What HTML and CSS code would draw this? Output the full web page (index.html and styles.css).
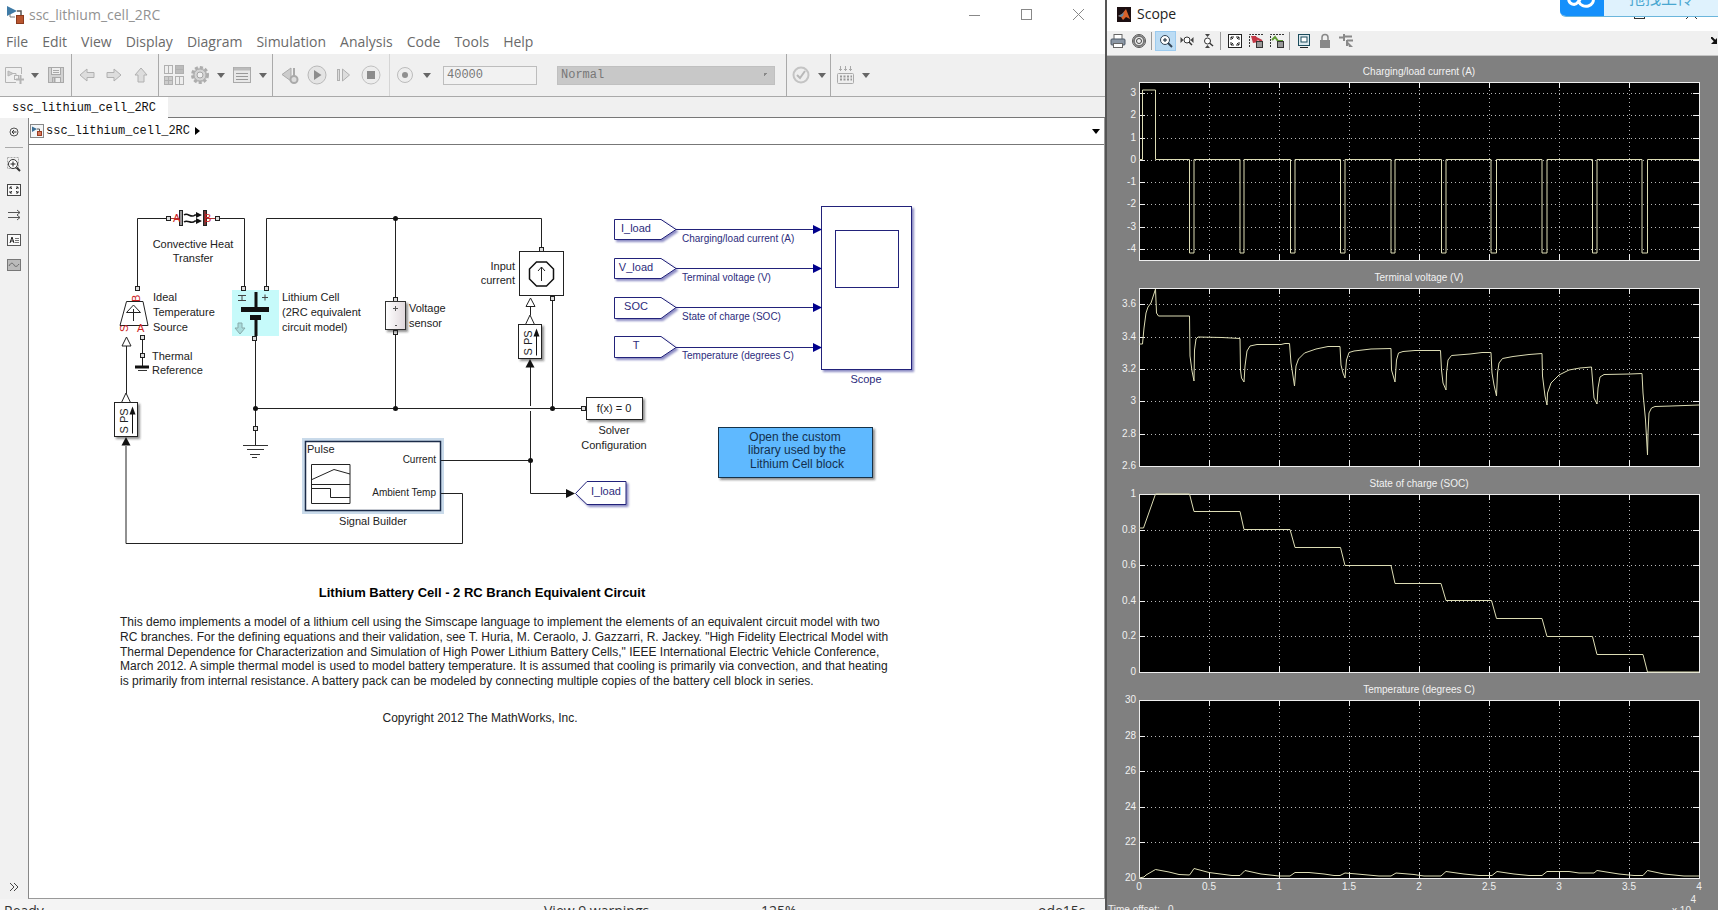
FILE: index.html
```html
<!DOCTYPE html>
<html lang="en">
<head>
<meta charset="utf-8">
<title>ssc_lithium_cell_2RC</title>
<link rel="stylesheet" href="styles.css">
</head>
<body>
<div class="desktop">
<main class="model-window">
  <header class="titlebar">
    <svg class="app-icon" width="18" height="20" viewBox="0 0 18 20"><path d="M0 1L10 6L0 11Z" fill="#3f7ba6"/><path d="M10 6H14V11" fill="none" stroke="#555" stroke-width="1.500"/><path d="M3 9V12H8" fill="none" stroke="#777"/><rect x="9.500" y="10.500" width="7" height="8" fill="#b8552f" stroke="#8b3b1e"/></svg>
    <h1 class="title">ssc_lithium_cell_2RC</h1>
    <div class="window-controls">
      <button aria-label="Minimize"><svg width="12" height="12"><path d="M0 6.500H11" stroke="#888" fill="none"/></svg></button>
      <button aria-label="Maximize"><svg width="12" height="12"><rect x=".5" y=".5" width="10" height="10" stroke="#888" fill="none"/></svg></button>
      <button aria-label="Close"><svg width="12" height="12"><path d="M0 0L11 11M11 0L0 11" stroke="#888" fill="none"/></svg></button>
    </div>
  </header>
  <nav class="menubar">
    <button>File</button><button>Edit</button><button>View</button><button>Display</button><button>Diagram</button><button>Simulation</button><button>Analysis</button><button>Code</button><button>Tools</button><button>Help</button>
  </nav>
  <div class="toolbar">
    <div class="group group-file">
      <button class="tool" aria-label="New model"><svg width="20" height="20" viewBox="0 0 20 20"><g fill="none" stroke="#b4b4b4"><path d="M12 17.500H1.500V2.500H17.500V9"/><path d="M4 6L9 8.500L4 11Z" fill="#ccc"/><path d="M9 8.500H12V11"/><rect x="10.500" y="10.500" width="4" height="4"/><path d="M16.500 10V19M12 14.500H20" stroke-width="2"/></g></svg></button>
      <button class="drop" aria-label="New options"></button>
      <button class="tool" aria-label="Save"><svg width="20" height="20" viewBox="0 0 20 20"><g fill="#d2d2d2" stroke="#a9a9a9"><rect x="2.500" y="2.500" width="15" height="15"/><rect x="5.500" y="2.500" width="9" height="7" fill="#eee"/><path d="M7 5.500H13M7 7.500H13"/><rect x="6.500" y="12.500" width="8" height="5" fill="#eee"/><path d="M8.500 13V17" stroke-width="2"/></g></svg></button>
    </div>
    <div class="group group-nav">
      <button class="tool" aria-label="Back"><svg width="20" height="20" viewBox="0 0 20 20"><path d="M3 10L10 4V7.500H17V12.500H10V16Z" fill="#ddd" stroke="#b0b0b0"/></svg></button>
      <button class="tool" aria-label="Forward"><svg width="20" height="20" viewBox="0 0 20 20"><path d="M17 10L10 4V7.500H3V12.500H10V16Z" fill="#ddd" stroke="#b0b0b0"/></svg></button>
      <button class="tool" aria-label="Up"><svg width="20" height="20" viewBox="0 0 20 20"><path d="M10 3L16 10H13V17H7V10H4Z" fill="#ddd" stroke="#b0b0b0"/></svg></button>
    </div>
    <div class="group group-lib">
      <button class="tool" aria-label="Library browser"><svg width="20" height="20" viewBox="0 0 20 20"><g fill="#eee" stroke="#b0b0b0"><rect x=".5" y=".5" width="8" height="8"/><rect x="11.500" y=".5" width="8" height="8" fill="#bbb"/><rect x=".5" y="11.500" width="8" height="8" fill="#ccc"/><rect x="11.500" y="11.500" width="8" height="8"/><path d="M4.500 0V8M1 15.500H8M4.500 12V19M12 4.500H19M15.500 12V19"/></g></svg></button>
      <button class="tool" aria-label="Configuration"><svg width="20" height="20" viewBox="0 0 20 20"><circle cx="10" cy="10" r="7.500" fill="#ccc" stroke="#adadad" stroke-width="3" stroke-dasharray="3 2"/><circle cx="10" cy="10" r="6" fill="#d5d5d5" stroke="#adadad"/><circle cx="10" cy="10" r="3" fill="#f0f0f0" stroke="#a5a5a5"/></svg></button>
      <button class="drop" aria-label="Configuration options"></button>
      <button class="tool" aria-label="Model explorer"><svg width="20" height="20" viewBox="0 0 20 20"><rect x="1.500" y="2.500" width="17" height="15" fill="#e8e8e8" stroke="#aaa"/><path d="M2 4H18" stroke="#bbb" stroke-width="3"/><path d="M4 8.500H16M4 11.500H16M4 14.500H16" stroke="#999"/></svg></button>
      <button class="drop" aria-label="Explorer options"></button>
    </div>
    <div class="group group-run">
      <button class="tool" aria-label="Step back"><svg width="20" height="20" viewBox="0 0 20 20"><path d="M11 3V16L2 9.500Z" fill="#ccc" stroke="#aaa"/><path d="M14 3V11" stroke="#aaa" stroke-width="2"/><circle cx="14" cy="14.500" r="3.500" fill="#ddd" stroke="#aaa" stroke-width="2"/></svg></button>
      <button class="tool" aria-label="Run"><svg width="20" height="20" viewBox="0 0 20 20"><circle cx="10" cy="10" r="9" fill="#e4e4e4" stroke="#b8b8b8"/><path d="M7 5L14.500 10L7 15Z" fill="#8c8c8c"/></svg></button>
      <button class="tool" aria-label="Step forward"><svg width="20" height="20" viewBox="0 0 20 20"><path d="M8.500 4L15.500 10L8.500 16Z" fill="#ddd" stroke="#b0b0b0"/><rect x="3.500" y="4.500" width="2" height="11" fill="#ddd" stroke="#b0b0b0"/></svg></button>
      <button class="tool" aria-label="Stop"><svg width="20" height="20" viewBox="0 0 20 20"><circle cx="10" cy="10" r="9" fill="#ededed" stroke="#c0c0c0"/><rect x="6" y="6" width="8" height="8" fill="#8c8c8c"/></svg></button>
    </div>
    <div class="group group-sim">
      <button class="tool" aria-label="Record"><svg width="20" height="20" viewBox="0 0 20 20"><circle cx="10" cy="10" r="7.500" fill="#ededed" stroke="#bcbcbc"/><circle cx="10" cy="10" r="3" fill="#8f8f8f"/></svg></button>
      <button class="drop" aria-label="Record options"></button>
      <input class="stop-time" type="text" value="40000" aria-label="Stop time">
      <select class="sim-mode" aria-label="Simulation mode"><option>Normal</option></select>
    </div>
    <div class="group group-check">
      <button class="tool" aria-label="Model advisor"><svg width="20" height="20" viewBox="0 0 20 20"><circle cx="10" cy="10" r="7.500" fill="#eee" stroke="#c4c4c4" stroke-width="2"/><path d="M6 10L9 13L14 6" fill="none" stroke="#b8b8b8" stroke-width="2"/></svg></button>
      <button class="drop" aria-label="Advisor options"></button>
    </div>
    <div class="group group-build">
      <button class="tool" aria-label="Build"><svg width="20" height="20" viewBox="0 0 20 20"><rect x="2.500" y="8.500" width="16" height="10" rx="1" fill="#eee" stroke="#aaa"/><path d="M5 11.500H17M5 14.500H17" stroke="#999" stroke-width="2" stroke-dasharray="2 1.500"/><path d="M5.500 1V6M10.500 1V6M15.500 1V6M4 4.500H7M9 4.500H12M14 4.500H17" stroke="#aaa"/></svg></button>
      <button class="drop" aria-label="Build options"></button>
    </div>
  </div>
  <div class="tabs"><button class="tab">ssc_lithium_cell_2RC</button></div>
  <div class="workspace">
    <aside class="palette">
      <button aria-label="Hide browser"><svg width="16" height="16" viewBox="0 0 16 16"><circle cx="8" cy="8" r="4" fill="none" stroke="#555"/><path d="M6 8H10.500M8 6L6 8L8 10" fill="none" stroke="#333"/></svg></button>
      <hr>
      <button aria-label="Zoom"><svg width="16" height="16" viewBox="0 0 16 16"><rect x="1.500" y=".5" width="11" height="11" fill="none" stroke="#aaa" stroke-dasharray="2 1"/><circle cx="7" cy="7" r="4.500" fill="#fff" stroke="#333"/><path d="M4.500 7H9.500M7 4.500V9.500" stroke="#222"/><path d="M10.500 10.500L14 14" stroke="#333" stroke-width="2"/></svg></button>
      <button aria-label="Fit to view"><svg width="16" height="16" viewBox="0 0 16 16"><rect x="1.500" y="2.500" width="13" height="11" fill="#fafafa" stroke="#444"/><path d="M4 7V5H6M10 5H12V7M12 9V11H10M6 11H4V9M4 5L6 7M12 5L10 7M12 11L10 9M4 11L6 9" stroke="#333" fill="none"/></svg></button>
      <button aria-label="Sample time"><svg width="16" height="16" viewBox="0 0 16 16"><path d="M2 5.500H14M11 3L14 5.500L11 8M2 10.500H14M11 8L14 10.500L11 13" fill="none" stroke="#555"/></svg></button>
      <button aria-label="Annotation"><svg width="16" height="16" viewBox="0 0 16 16"><rect x="1.500" y="2.500" width="13" height="11" fill="#fafafa" stroke="#555"/><path d="M4 11L6 5L8 11M4.500 9H7.500" fill="none" stroke="#222"/><path d="M9 6.500H13M9 8.500H13M9 10.500H13" stroke="#777"/></svg></button>
      <button aria-label="Image"><svg width="16" height="16" viewBox="0 0 16 16"><rect x="1.500" y="2.500" width="13" height="11" fill="#bbb" stroke="#777"/><path d="M3 9C5 5 7 6 8 8S11 10 13 7" fill="none" stroke="#666"/></svg></button>
      <button class="expand" aria-label="More"><svg width="16" height="16" viewBox="0 0 16 16"><path d="M4 4L8 8L4 12M8 4L12 8L8 12" fill="none" stroke="#444"/></svg></button>
    </aside>
    <section class="editor">
      <div class="breadcrumb">
        <svg width="14" height="14" viewBox="0 0 14 14"><rect x=".5" y=".5" width="13" height="13" fill="#f4f6f8" stroke="#888"/><path d="M2 2.500L7 5L2 8Z" fill="#3c6f96"/><path d="M7 5H9.500V7" fill="none" stroke="#555"/><rect x="7.500" y="7.500" width="4" height="4" fill="#d87a5c" stroke="#9c3d22"/></svg>
        <span class="crumb">ssc_lithium_cell_2RC</span>
        <svg width="6" height="8"><path d="M0 0L5 4L0 8Z"/></svg>
        <button class="history" aria-label="History"></button>
      </div>
      <div class="canvas">
      <svg class="diagram" width="1060" height="740" viewBox="29 145 1060 740">
        <defs>
          <filter id="shadow" x="-20%" y="-20%" width="150%" height="150%"><feDropShadow dx="2" dy="2" stdDeviation="1" flood-color="#222" flood-opacity=".5"/></filter>
          <filter id="blueshadow" x="-20%" y="-20%" width="150%" height="150%"><feDropShadow dx="2" dy="2" stdDeviation="1" flood-color="#00007a" flood-opacity=".45"/></filter>
          <linearGradient id="sensor"><stop offset="0" stop-color="#fff"/><stop offset="1" stop-color="#e0d8dc"/></linearGradient>
          <rect id="port" x="-2" y="-2" width="4" height="4"/>
          <g id="sps">
            <rect x="-11.500" y="0" width="23" height="34" fill="#fff" stroke="#222" filter="url(#shadow)"/>
            <text class="rot" transform="translate(2 31) rotate(-90)">S PS</text>
            <path d="M6.500 31V10" stroke="#111"/><path d="M6.500 4L3.500 12H9.500Z" fill="#111"/>
            <path d="M0 -9.500L-4.500 0H4.500Z" fill="#fff" stroke="#222"/>
            <path d="M0 34.500L-4.500 43H4.500Z" fill="#111"/>
          </g>
        </defs>
        <rect x="302" y="438" width="142" height="76" fill="#c9daea"/>
        <g class="wires">
          <path d="M137.500 287V218.500H168M218 218.500H244.500V287M266.500 287V218.500H541.500V247M395.500 218.500V299M395.500 334V408.500M255.500 339V445M255.500 408.500H583M552.500 299V408.500M530.500 367V406M530.500 411V493.500H567M441 460.500H530M441 493.500H462.500V543.500H126V446M126.500 346V394M142.500 339V366M530.500 307V315"/>
        </g>
        <g fill="#111"><circle cx="395.500" cy="218.500" r="2.500"/><circle cx="255.500" cy="408.500" r="2.500"/><circle cx="395.500" cy="408.500" r="2.500"/><circle cx="552.500" cy="408.500" r="2.500"/><circle cx="530.500" cy="460.500" r="2.500"/></g>
        <g>
          <path d="M170 218.500H179M207 218.500H216" stroke="#a33"/>
          <rect x="179.500" y="210.500" width="3" height="15" fill="#999" stroke="#222"/><rect x="203.500" y="210.500" width="3" height="15" fill="#733" stroke="#222"/>
          <path d="M184 215C188 212 191 219 195 215H200M184 222C188 219 191 225 195 221H200" fill="none" stroke="#111" stroke-width="1.500"/><path d="M202 215L196 212V218ZM202 221L196 218V224Z" fill="#111"/>
          <text class="red" x="173" y="222">A</text><text class="red" x="204" y="222">B</text>
        </g>
        <g>
          <path d="M126.500 301.500H143L148 325.500H120Z" fill="#fff" stroke="#222"/><path d="M133.500 305L140.500 312.500H126.500ZM133.500 309V321" fill="none" stroke="#222"/>
          <text class="red" transform="translate(131 302) rotate(-90) translate(0 9)">B</text>
          <text class="red" transform="translate(120 332) rotate(-90) translate(0 8)">S</text>
          <text class="red" x="137" y="332">A</text>
          <path d="M126.500 337L122 346H131Z" fill="#fff" stroke="#222"/>
          <path d="M135 367H149" stroke="#111" stroke-width="3"/><path d="M138 370.500H147" stroke="#333"/>
        </g>
        <g>
          <rect x="232" y="290" width="47" height="46" fill="#c6fafa"/>
          <path d="M256 292V308M256 320V336" stroke="#111" stroke-width="3"/><rect x="241" y="307" width="28" height="5" fill="#111"/><rect x="250" y="315" width="11" height="5" fill="#111"/>
          <path d="M238 295.500H246M238 300.500H246M242 295.500V300.500M262 297.500H268M265 294.500V300.500" stroke="#444" fill="none"/>
          <path d="M238 323H242V328H245L240 334L235 328H238Z" fill="#a9dcdc" stroke="#8aa"/>
          <path d="M243 445.500H268M247 449.500H264M250 454.500H260M252 457.500H257" stroke="#333" fill="none"/>
        </g>
        <g class="ports"><use href="#port" x="168.500" y="218.500"/><use href="#port" x="217.500" y="218.500"/><use href="#port" x="137.500" y="288.500"/><use href="#port" x="243.500" y="288.500"/><use href="#port" x="266.500" y="288.500"/><use href="#port" x="254.500" y="338.500"/><use href="#port" x="255.500" y="428.500"/><use href="#port" x="142.500" y="337.500"/><use href="#port" x="142.500" y="355.500"/><use href="#port" x="395.500" y="299.500"/><use href="#port" x="395.500" y="332.500"/><use href="#port" x="541.500" y="249.500"/><use href="#port" x="552.500" y="298.500"/><use href="#port" x="583.500" y="408.500"/></g>
        <rect x="385.500" y="301.500" width="20" height="28" fill="url(#sensor)" stroke="#333" filter="url(#shadow)"/>
        <path d="M393 308.500H398M395.500 306V311M395 325.500H397" stroke="#555"/>
        <rect x="519.500" y="251.500" width="44" height="44" fill="#fff" stroke="#222"/>
        <path d="M536.500 262H546.500L553.500 269V279L546.500 286H536.500L529.500 279V269Z" fill="none" stroke="#111" stroke-width="1.500"/><path d="M541.500 281V267M538 271L541.500 267L545 271" fill="none" stroke="#222"/>
        <path d="M530.500 298L526 306.500H535Z" fill="#fff" stroke="#222"/>
        <use href="#sps" x="126" y="402.500"/><use href="#sps" x="530" y="324.500"/>
        <rect x="586.500" y="397.500" width="56" height="22" fill="#fff" stroke="#222" filter="url(#shadow)"/>
        <rect x="305.500" y="441.500" width="135" height="69" fill="#fff" stroke="#1b2b48" stroke-width="1.500"/>
        <path d="M311.500 464.500H350V503.500H311.500ZM311.500 484.500H350M312 479.500L334 469.500L350 474M312 488.500H330.500V497.500H350" fill="none" stroke="#222"/>
        <path d="M566 489L575 493.500L566 498Z" fill="#111"/><path d="M575.500 493.500L587 481.500H626V504.500H587Z" fill="#fff" stroke="#22227a" filter="url(#blueshadow)"/>
        <g fill="#fff" stroke="#22227a">
          <path d="M614.500 219.500H661L676 229.500L661 239.500H614.500Z" filter="url(#blueshadow)"/><path d="M614.500 258.500H661L676 268.500L661 278.500H614.500Z" filter="url(#blueshadow)"/><path d="M614.500 297.500H661L676 307.500L661 318.500H614.500Z" filter="url(#blueshadow)"/><path d="M614.500 336.500H661L676 347.500L661 357.500H614.500Z" filter="url(#blueshadow)"/>
          <rect x="821.500" y="206.500" width="90" height="163" filter="url(#blueshadow)"/><rect x="835.500" y="230.500" width="63" height="57"/>
          <path d="M676 229.500H814M676 268.500H814M676 307.500H814M676 347.500H814"/>
        </g>
        <path d="M813 225L822 229.500L813 234ZM813 264L822 268.500L813 273ZM813 303L822 307.500L813 312ZM813 343L822 347.500L813 352Z" fill="#00008c"/>
        <rect x="718.500" y="427.500" width="154" height="50" fill="#5fb9ff" stroke="#15304a" filter="url(#shadow)"/>
        <g class="label mid">
          <text x="193" y="248">Convective Heat</text><text x="193" y="262">Transfer</text>
          <text x="614" y="412">f(x) = 0</text><text x="614" y="434">Solver</text><text x="614" y="449">Configuration</text>
          <text x="373" y="525">Signal Builder</text>
        </g>
        <g class="label">
          <text x="153" y="301">Ideal</text><text x="153" y="316">Temperature</text><text x="153" y="331">Source</text>
          <text x="152" y="360">Thermal</text><text x="152" y="374">Reference</text>
          <text x="282" y="301">Lithium Cell</text><text x="282" y="316">(2RC equivalent</text><text x="282" y="331">circuit model)</text>
          <text x="409" y="312">Voltage</text><text x="409" y="327">sensor</text><text x="307" y="453">Pulse</text>
        </g>
        <g class="label end"><text x="515" y="270">Input</text><text x="515" y="284">current</text></g>
        <g class="small end"><text x="436" y="463">Current</text><text x="436" y="496">Ambient Temp</text></g>
        <g class="label mid blue"><text x="636" y="232">I_load</text><text x="636" y="271">V_load</text><text x="636" y="310">SOC</text><text x="636" y="349">T</text><text x="606" y="495">I_load</text><text x="866" y="383">Scope</text></g>
        <g class="small blue"><text x="682" y="242">Charging/load current (A)</text><text x="682" y="281">Terminal voltage (V)</text><text x="682" y="320">State of charge (SOC)</text><text x="682" y="359">Temperature (degrees C)</text></g>
        <g class="note mid navy"><text x="795" y="441">Open the custom</text><text x="797" y="454">library used by the</text><text x="797" y="468">Lithium Cell block</text></g>
        <text class="note mid heading" x="482" y="597">Lithium Battery Cell - 2 RC Branch Equivalent Circuit</text>
        <g class="note">
          <text x="120" y="626">This demo implements a model of a lithium cell using the Simscape language to implement the elements of an equivalent circuit model with two</text>
          <text x="120" y="641">RC branches. For the defining equations and their validation, see T. Huria, M. Ceraolo, J. Gazzarri, R. Jackey. "High Fidelity Electrical Model with</text>
          <text x="120" y="656">Thermal Dependence for Characterization and Simulation of High Power Lithium Battery Cells," IEEE International Electric Vehicle Conference,</text>
          <text x="120" y="670">March 2012. A simple thermal model is used to model battery temperature. It is assumed that cooling is primarily via convection, and that heating</text>
          <text x="120" y="685">is primarily from internal resistance. A battery pack can be modeled by connecting multiple copies of the battery cell block in series.</text>
        </g>
        <text class="note mid" x="480" y="722">Copyright 2012 The MathWorks, Inc.</text>
      </svg>
      </div>
    </section>
  </div>
  <footer class="statusbar"><span>Ready</span><span>View 9 warnings</span><span>125%</span><span>ode15s</span></footer>
</main>

<aside class="scope-window">
  <header class="scope-title">
    <svg width="14" height="15" viewBox="0 0 14 15"><rect width="14" height="15" fill="#1c0f12"/><path d="M1 9L5 7L9 2L13 12L9 10L6 13L4 10Z" fill="#d8622a"/><path d="M1 9L5 7L7 5L6 9L4 10Z" fill="#5c8aa8"/></svg>
    <h2 class="title">Scope</h2>
    <div class="scope-controls">
      <button aria-label="Maximize"><svg width="12" height="12"><rect x=".5" y=".5" width="10" height="10" stroke="#333" fill="none"/></svg></button>
      <button aria-label="Close"><svg width="12" height="12"><path d="M0 0L11 11M11 0L0 11" stroke="#333" fill="none"/></svg></button>
    </div>
  </header>
  <div class="scope-tools">
    <button aria-label="Print"><svg width="16" height="16" viewBox="0 0 16 16"><rect x="4" y="1.500" width="8" height="5" fill="#fff" stroke="#666"/><rect x="1" y="6" width="14" height="6" rx="1" fill="#8b97a5" stroke="#4c5866"/><rect x="3.500" y="10.500" width="9" height="4" fill="#fff" stroke="#666"/></svg></button>
    <button aria-label="Parameters"><svg width="16" height="16" viewBox="0 0 16 16"><circle cx="8" cy="8" r="5" fill="none" stroke="#777" stroke-width="2"/><circle cx="8" cy="8" r="6.500" fill="none" stroke="#555"/><circle cx="8" cy="8" r="2.500" fill="#eee" stroke="#444"/></svg></button>
    <i class="rule"></i>
    <button class="active" aria-label="Zoom"><svg width="16" height="16" viewBox="0 0 16 16"><circle cx="7" cy="7" r="4.500" fill="#fff" stroke="#345"/><path d="M5 7H9M7 5V9" stroke="#123"/><path d="M10 10L14 14" stroke="#345" stroke-width="2"/></svg></button>
    <button aria-label="Zoom X"><svg width="16" height="16" viewBox="0 0 16 16"><path d="M1.500 4V10L4.500 7ZM14.500 4V10L11.500 7Z" fill="#444"/><circle cx="8" cy="7" r="3" fill="#fff" stroke="#333"/><path d="M10 9L13 12" stroke="#333" stroke-width="1.500"/></svg></button>
    <button aria-label="Zoom Y"><svg width="16" height="16" viewBox="0 0 16 16"><path d="M5 1H10L7.500 4ZM5 15H10L7.500 12Z" fill="#444"/><circle cx="7.500" cy="8" r="3" fill="#fff" stroke="#333"/><path d="M9.500 10L13 13" stroke="#333" stroke-width="1.500"/></svg></button>
    <i class="rule"></i>
    <button aria-label="Autoscale"><svg width="16" height="16" viewBox="0 0 16 16"><rect x="1.500" y="1.500" width="13" height="13" fill="#fff" stroke="#222"/><path d="M4 7V4H7M9 4H12V7M12 9V12H9M7 12H4V9M4 4L6 6M12 4L10 6M12 12L10 10M4 12L6 10" fill="none" stroke="#222"/></svg></button>
    <button aria-label="Save axes"><svg width="16" height="16" viewBox="0 0 16 16"><path d="M1.500 14V1.500H15" fill="none" stroke="#333" stroke-dasharray="2 1"/><path d="M3 3L8 3L10 9L5 10Z" fill="#c33745"/><path d="M6 4L14 8" stroke="#c33745" stroke-width="2"/><rect x="8.500" y="8.500" width="6" height="6" fill="#999" stroke="#333"/></svg></button>
    <button aria-label="Restore axes"><svg width="16" height="16" viewBox="0 0 16 16"><path d="M1.500 14V1.500H15" fill="none" stroke="#333" stroke-dasharray="2 1"/><path d="M3 7L6 4L9 8L14 8" fill="none" stroke="#5f9b35" stroke-width="2"/><rect x="8.500" y="8.500" width="6" height="6" fill="#999" stroke="#333"/></svg></button>
    <i class="rule"></i>
    <button aria-label="Floating scope"><svg width="16" height="16" viewBox="0 0 16 16"><rect x="2.500" y="1.500" width="11" height="11" fill="#dce9ee" stroke="#1c4c5c"/><rect x="5" y="4" width="6" height="5" fill="#fff" stroke="#1c4c5c"/><path d="M4 14.500H12" stroke="#222"/></svg></button>
    <button aria-label="Lock axes"><svg width="16" height="16" viewBox="0 0 16 16"><path d="M5 8V4.500A3 3 0 0 1 11 4.500V8" fill="none" stroke="#888" stroke-width="1.500"/><rect x="3" y="7" width="10" height="8" fill="#888"/></svg></button>
    <button aria-label="Signal selection"><svg width="16" height="16" viewBox="0 0 16 16"><path d="M1 4.500H6M6 1V8M6 3.500H14M9 7.500H15M9 7V13" fill="none" stroke="#888" stroke-width="2"/><path d="M9 8L15 14L11 14Z" fill="#888"/></svg></button>
    <button class="dock" aria-label="Dock"><svg width="7" height="8"><path d="M0 0L5 5" stroke="#111" stroke-width="2"/><path d="M6 1V7H0Z" fill="#111"/></svg></button>
  </div>
  <div class="plots" id="plots"></div>
  <footer class="scope-foot"><span>Time offset:&nbsp;&nbsp; 0</span><span class="exponent"><sup>4</sup><span>x 10</span></span></footer>
  <div class="upload">
    <svg width="44" height="17" viewBox="0 0 44 17"><path d="M9 -2A5 5 0 0 0 18 2L22 -3M19 2A7 6 0 0 0 33 -2" fill="none" stroke="#fff" stroke-width="3"/></svg>
    <span>拖拽上传</span>
  </div>
</aside>
</div>
<script src="plots.js"></script>
</body>
</html>
```
FILE: styles.css
```css
* { box-sizing: border-box; }
body { margin: 0; overflow: hidden; font-family: "Open Sans", "Noto Sans", sans-serif; background: #fff; }
button { border: 0; padding: 0; background: none; font: inherit; color: inherit; display: flex; align-items: center; justify-content: center; }
svg { display: block; flex: none; }
.desktop { display: grid; grid-template-columns: 1105fr 613fr; height: 100vh; }

.model-window { display: flex; flex-direction: column; min-width: 0; height: 100vh; background: #fff; }
.titlebar { display: flex; align-items: center; height: 29px; padding-left: 7px; flex: none; }
.title { margin: 0; font-weight: 400; font-size: 14px; line-height: 20px; }
.titlebar .title { color: #929292; margin-left: 4px; flex: 1; }
.window-controls { display: flex; }
.window-controls button { width: 52px; height: 28px; }
.menubar { display: flex; gap: 14px; height: 25px; padding-left: 6px; font-size: 14px; line-height: 25px; color: #6a6a6a; flex: none; }
.toolbar { display: flex; height: 43px; background: #f0f0f0; border-bottom: 1px solid #a9a9a9; flex: none; }
.group { display: flex; align-items: center; border-right: 1px solid #aaa; }
.group-file { gap: 6px; padding: 0 5px 0 4px; }
.group-nav { gap: 7px; padding: 0 7px 0 5px; }
.group-lib { gap: 6px; padding: 0 4px 0 5px; }
.group-run { gap: 7px; padding: 0 8px 0 7px; border-color: #d5d5d5; }
.group-sim { gap: 7px; padding: 0 11px 0 5px; }
.group-check, .group-build { gap: 6px; padding: 0 3px 0 4px; }
.group-build { border: 0; }
.tool { width: 20px; height: 20px; }
.drop { width: 10px; height: 20px; }
.drop::before, .history::before { content: ""; border: 4px solid transparent; border-top: 5px solid #666; border-bottom: 0; }
.stop-time, .sim-mode { font-family: "Liberation Mono", monospace; font-size: 12px; height: 19px; border: 1px solid #bdbdbd; color: #777; padding: 0 3px; }
.stop-time { width: 94px; margin-left: 4px; background: #f2f2f2; }
.sim-mode { width: 218px; margin-left: 13px; appearance: none; background: linear-gradient(135deg, #888 50%, transparent 50%) no-repeat right 6px center / 4px 4px #c8c8c8; border-color: #c0c0c0; border-radius: 0; }
.tabs { display: flex; height: 21px; background: #f0f0f0; border-bottom: 1px solid #777; flex: none; }
.tab, .crumb { font-family: "Liberation Mono", monospace; font-size: 12px; line-height: 20px; color: #111; }
.tab { width: 168px; height: 21px; background: #fff; }
.workspace { display: flex; flex: 1; min-height: 0; }
.palette { width: 28px; background: #f1f1f1; display: flex; flex-direction: column; align-items: center; padding-top: 1px; }
.palette button { width: 25px; height: 25px; }
.palette hr { width: 18px; margin: 3px 0 4px; border: 0; border-top: 1px solid #aaa; }
.palette .expand { margin-top: auto; }
.editor { flex: 1; min-width: 0; display: flex; flex-direction: column; border-left: 1px solid #888; border-right: 1px solid #999; border-bottom: 1px solid #999; }
.breadcrumb { display: flex; align-items: center; gap: 2px; height: 27px; padding: 0 3px 0 1px; border-bottom: 1px solid #777; background: #fff; flex: none; }
.crumb { margin-right: 3px; }
.history { margin-left: auto; width: 10px; height: 20px; }
.history::before { border-top-color: #000; }
.canvas { flex: 1; min-height: 0; overflow: hidden; }
.statusbar { display: grid; grid-template-columns: 540fr 217fr 277fr 67fr; height: 11px; padding: 3px 0 0 4px; overflow: hidden; font-size: 14px; line-height: 18px; color: #333; background: #f4f4f4; flex: none; }

.diagram text { font-family: "Liberation Sans", Arial, sans-serif; fill: #222; }
.diagram .wires { fill: none; stroke: #222; }
.diagram .ports { fill: #ddd; stroke: #222; }
.diagram .label text { font-size: 11px; }
.diagram .small text { font-size: 10px; }
.diagram .rot { font-size: 11px; }
.diagram .note text, .diagram text.note { font-size: 12px; }
.diagram text.heading { font-size: 13px; font-weight: 700; fill: #000; }
.diagram .mid { text-anchor: middle; }
.diagram .end { text-anchor: end; }
.diagram .blue text { fill: #2c2c7c; }
.diagram .navy text { fill: #14304e; }
.diagram text.red { fill: #c22; font-size: 11px; }

.scope-window { position: relative; display: flex; flex-direction: column; min-width: 0; height: 100vh; overflow: hidden; background: #808080; border-left: 2px solid #555; }
.scope-title { display: flex; align-items: center; gap: 6px; height: 31px; padding: 0 0 3px 10px; background: #fff; color: #222; flex: none; }
.scope-controls { display: flex; margin-left: auto; }
.scope-controls button { width: 52px; height: 26px; }
.scope-tools { display: flex; align-items: center; height: 25px; padding: 0 0 4px; background: #f0f0f0; border-bottom: 1px solid #c4c4c4; flex: none; }
.scope-tools button { width: 21px; height: 20px; }
.scope-tools .active { background: #bcdcf4; border: 1px solid #9ccbef; }
.rule { width: 1px; height: 18px; margin: 0 3px 0 2px; background: #999; }
.scope-tools .dock { margin-left: auto; width: 8px; }
.plots { flex: none; padding: 0 19px 0 32px; }
.plot { margin: 0; padding-top: 6px; height: 206px; }
.plot figcaption, .plot text, .scope-foot { font-family: "Liberation Sans", Arial, sans-serif; font-size: 10px; }
.plot figcaption { height: 20px; line-height: 20px; text-align: center; color: #f2f2f2; }
.plot svg { overflow: visible; }
.plot .area { width: 100%; height: 178px; }
.plot text { fill: #f0f0f0; }
.plot .frame { fill: #000; stroke: #eee; shape-rendering: crispEdges; }
.plot .grid line { stroke: #b8b8b8; stroke-dasharray: 1 3; shape-rendering: crispEdges; }
.plot .tick { stroke: #eee; shape-rendering: crispEdges; }
.plot .curve { fill: none; stroke: #dcdcb4; vector-effect: non-scaling-stroke; }
.ylabel { text-anchor: end; }
.xlabel { text-anchor: middle; }
.scope-foot { display: flex; justify-content: space-between; padding: 15px 22px 0 1px; color: #eee; line-height: 12px; }
.scope-foot > span:first-child { padding-top: 9px; }
.exponent { display: flex; flex-direction: column; align-items: flex-end; }
.exponent sup { font-size: 10px; line-height: 10px; vertical-align: baseline; }
.exponent > span { padding-right: 5px; line-height: 12px; }
.upload { position: absolute; top: 0; right: 0; width: 158px; height: 17px; overflow: hidden; display: flex; background: #dff2fd; border-bottom: 1px solid #6bb6dc; border-bottom-left-radius: 6px; }
.upload svg { background: #1590fb; }
.upload span { font-family: "Open Sans", "Noto Sans CJK SC", sans-serif; font-size: 16px; line-height: 16px; margin: -10px 0 0 25px; color: #4aa7d0; }
```
FILE: plots.js
```js
const NS = "http://www.w3.org/2000/svg";

// Curves use a 560 x 178 drawing area that stretches with the window.
const pulses = [[50.5, 55], [101, 105], [151.5, 156], [201.5, 206], [252, 256], [302.5, 307], [352, 357.5], [403, 408], [453.5, 458], [503, 508.5]];
const current = "M0 77.5H3.5V8H16.5V77.5" + pulses.map(([a, b]) => `H${a}V171H${b}V77.5`).join("") + "H560";

const voltage = "M0 56H3.5L5 40L7 25L9 19L12 15L16.500 1L17.500 25L19.500 28H50.500L51 68L53 83L55 93L55.500 62L57 51L59 49L83 49.500L101 50.500L101.500 82L102.500 90L105 94L106 78L108 63L111 58L118 56.500H142L146 55.500H150.500L152 75L154 88L155.500 98L157 78L159.500 71L165.500 65L177 61L189 58.500H201L202 77L204 85L206 90L207.500 72L210 64.500L215 63L232 61L252 60.500L252.500 82L256 94L257.500 72L259.500 65L264 63.500L276 62.500H301.500L302.500 82L304 95L307 102L307.500 85L309 72L312.500 67.500L331 66L343 64.500H352L353 85L355 97L357.500 108L358.500 85L360 75L363.500 70.500L374 68.500L390 66.500L403 65.500L403.500 88L406 108L408 117L408.500 105L412 95L420 87L430 82L441 80L452.500 79L453.500 92L455 110L458 116L459 100L461 89L465 86.500L491 86L503 85.500L504 105L506.500 132L508.500 167L509 145L510 125L512.500 120L516 118.500L532 118L560 117";

const soc = "M0 34H4.500L16.500 0H50.500L55 17.500H101L105 35.500H151L156 53.500H201.500L206 71.500H252L256 89.500H302L307 106.500H352.500L357.500 124.500H403L408 142.500H453.500L458 160.500H504L508.500 178H560";

const temperature = "M0 178L5 177L7 175L16.500 169.500L30 172L40 174.500L50.500 175L52 173L55 168.500L70 172.500L93 175.500H101L106 170.500L122 174L140 176H151L156 172.500H170L185 174L195 175.500H201L206 173L218 174L240 176H252L257 173L275 174.500L285 176H302L307 171.500L325 174L340 175.500H353L358 171.500L375 174L390 175.500H403L408 171.500H430L440 173H455L458 170.500L480 174L495 175.500H504L508.500 170.500L525 174L545 176H560";

const plots = [
  { title: "Charging/load current (A)", min: -4.5, max: 3.5, ticks: [3, 2, 1, 0, -1, -2, -3, -4], path: current },
  { title: "Terminal voltage (V)", min: 2.6, max: 3.7, ticks: [3.6, 3.4, 3.2, 3, 2.8, 2.6], path: voltage },
  { title: "State of charge (SOC)", min: 0, max: 1, ticks: [1, 0.8, 0.6, 0.4, 0.2, 0], path: soc },
  { title: "Temperature (degrees C)", min: 20, max: 30, ticks: [30, 28, 26, 24, 22, 20], path: temperature, xlabels: true }
];

function add(parent, name, attrs, text) {
  const el = document.createElementNS(NS, name);
  for (const key in attrs) el.setAttribute(key, attrs[key]);
  if (text !== undefined) el.textContent = text;
  parent.appendChild(el);
  return el;
}

for (const plot of plots) {
  const figure = document.createElement("figure");
  figure.className = "plot";
  const caption = document.createElement("figcaption");
  caption.textContent = plot.title;
  figure.appendChild(caption);

  const area = add(figure, "svg", { class: "area" });
  add(area, "rect", { class: "frame", width: "100%", height: "100%" });
  const grid = add(area, "g", { class: "grid" });
  const right = add(area, "svg", { x: "100%", width: 1, height: 178 });

  for (let i = 0; i <= 8; i++) {
    const x = i * 12.5 + "%";
    if (i > 0 && i < 8) {
      add(grid, "line", { x1: x, x2: x, y1: 0, y2: "100%" });
      add(area, "line", { class: "tick", x1: x, x2: x, y1: 0, y2: 6 });
      add(area, "line", { class: "tick", x1: x, x2: x, y1: 172, y2: 178 });
    }
    if (plot.xlabels) add(area, "text", { class: "xlabel", x, y: 190 }, i / 2);
  }
  for (const value of plot.ticks) {
    const y = Math.round(178 * (plot.max - value) / (plot.max - plot.min));
    if (y > 0 && y < 178) {
      add(grid, "line", { x1: 0, x2: "100%", y1: y, y2: y });
      add(area, "line", { class: "tick", x1: 0, x2: 6, y1: y, y2: y });
      add(right, "line", { class: "tick", x1: -6, x2: 0, y1: y, y2: y });
    }
    add(area, "text", { class: "ylabel", x: -3, y: y + 3 }, value);
  }
  const layer = add(area, "svg", { width: "100%", height: "100%", viewBox: "0 0 560 178", preserveAspectRatio: "none" });
  add(layer, "path", { class: "curve", d: plot.path });
  document.getElementById("plots").appendChild(figure);
}
```
